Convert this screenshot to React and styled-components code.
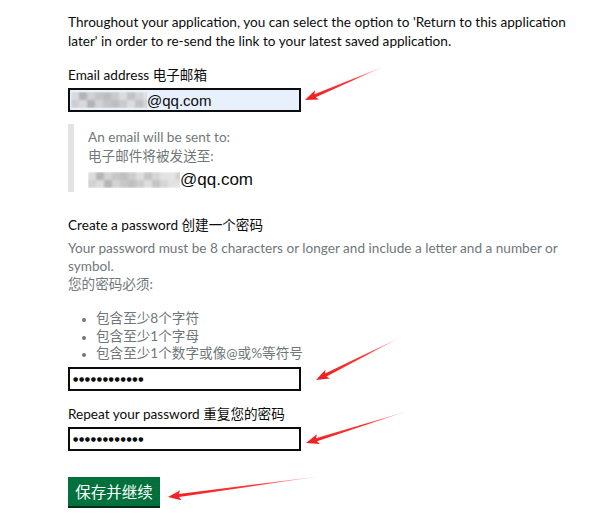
import React from 'react';
import styled, { createGlobalStyle } from 'styled-components';

const GlobalStyle = createGlobalStyle`
  html, body {
    margin: 0;
    background: #fff;
  }
  body {
    font-family: Lato, "Noto Sans CJK SC", sans-serif;
    color: #0b0c0c;
  }
`;

const Page = styled.div`
  position: relative;
  width: 600px;
  height: 528px;
  padding: 13px 0 0 68px;
  box-sizing: border-box;
`;

const Lead = styled.p`
  margin: 0 0 15px;
  font-size: 13.6px;
  line-height: 19px;
  width: 520px;
`;

const Label = styled.div`
  font-size: 13.6px;
  line-height: 19px;
  margin-bottom: 3px;
`;

const Field = styled.div`
  width: 233px;
  height: 24px;
  box-sizing: border-box;
  border: 2px solid #0b0c0c;
  background: ${p => (p.$filled ? '#e8f0fe' : '#fff')};
  display: flex;
  align-items: center;
  padding-left: ${p => (p.$filled ? '1px' : '3px')};
  font-family: "Liberation Sans", Arial, sans-serif;
  font-size: 15px;
  margin-bottom: ${p => p.$gap || 0}px;
`;

const Dots = styled.span`
  font-family: "DejaVu Sans", sans-serif;
  font-size: 6px;
  letter-spacing: 0.7px;
  line-height: 1;
`;

const Inset = styled.div`
  margin: 12px 0 0;
  border-left: 6px solid #e3e3e3;
  padding: 4px 0 4px 14px;
  height: 60px;
`;

const Grey = styled.div`
  color: #6f777b;
  font-size: 13.6px;
  line-height: 19px;
`;

const SentTo = styled.div`
  display: flex;
  align-items: center;
  margin-top: 4px;
  font-family: "Liberation Sans", Arial, sans-serif;
  font-size: 17px;
  color: #0b0c0c;
`;

const Section = styled.div`
  margin-top: 24px;
`;

const Hint = styled.div`
  color: #6f777b;
  font-size: 13.6px;
  line-height: 18px;
  margin-top: 4px;
`;

const Bullets = styled.ul`
  margin: 17px 0 4px;
  padding-left: 28px;
  color: #6f777b;
  font-size: 13.6px;
  line-height: 17.5px;
  li::marker {
    font-size: 11px;
  }
`;

const Button = styled.button`
  margin-top: 26px;
  width: 92px;
  height: 29px;
  border: none;
  background: #00703c;
  box-shadow: 0 2px 0 #002d18;
  color: #fff;
  font-family: "Noto Sans CJK SC", sans-serif;
  font-size: 15.5px;
  padding: 0;
`;

const Overlay = styled.svg`
  position: absolute;
  left: 0;
  top: 0;
  pointer-events: none;
`;

function Mosaic({ width, height }) {
  const greys = ['#d6d6d6', '#c4c4c4', '#e0e0e0', '#bdbdbd', '#cfcfcf', '#a9a9a9', '#d9d9d9', '#c9c9c9', '#b5b5b5', '#dedede', '#cccccc', '#bababa'];
  const cols = Math.ceil(width / 8);
  const cells = [];
  for (let c = 0; c < cols; c++) {
    for (let r = 0; r < 2; r++) {
      cells.push(
        <rect key={`${c}-${r}`} x={c * 8} y={r * (height / 2)} width={8} height={height / 2}
          fill={greys[(c * 5 + r * 7) % greys.length]} />
      );
    }
  }
  return (
    <svg width={width} height={height} style={{ display: 'block' }}>
      <defs>
        <filter id="blr"><feGaussianBlur stdDeviation="1" /></filter>
      </defs>
      <g filter="url(#blr)" opacity="0.85">{cells}</g>
    </svg>
  );
}

function Arrow({ x1, y1, x2, y2 }) {
  // tail (x1,y1) -> tip (x2,y2), tapering stroke with a head
  const dx = x2 - x1;
  const dy = y2 - y1;
  const len = Math.hypot(dx, dy);
  const ux = dx / len;
  const uy = dy / len;
  const nx = -uy;
  const ny = ux;
  const headLen = 11;
  const bx = x2 - ux * headLen;
  const by = y2 - uy * headLen;
  const pts = [
    [x1, y1],
    [bx + nx * 1.6, by + ny * 1.6],
    [bx - ux * 2 + nx * 5, by - uy * 2 + ny * 5],
    [x2, y2],
    [bx - ux * 2 - nx * 5, by - uy * 2 - ny * 5],
    [bx - nx * 1.6, by - ny * 1.6],
  ];
  return (
    <polygon points={pts.map(p => p.join(',')).join(' ')} fill="url(#arrowGrad)" />
  );
}

export default function App() {
  return (
    <>
      <GlobalStyle />
      <Page>
        <Lead>
          Throughout your application, you can select the option to 'Return to this application
          later' in order to re-send the link to your latest saved application.
        </Lead>

        <Label>Email address 电子邮箱</Label>
        <Field $filled>
          <Mosaic width={76} height={16} />
          <span>@qq.com</span>
        </Field>

        <Inset>
          <Grey>An email will be sent to:</Grey>
          <Grey>电子邮件将被发送至:</Grey>
          <SentTo>
            <Mosaic width={92} height={16} />
            <span>@qq.com</span>
          </SentTo>
        </Inset>

        <Section>
          <Label>Create a password 创建一个密码</Label>
          <Hint>
            Your password must be 8 characters or longer and include a letter and a number or
            symbol.
            <br />
            您的密码必须:
          </Hint>
          <Bullets>
            <li>包含至少8个字符</li>
            <li>包含至少1个字母</li>
            <li>包含至少1个数字或像@或%等符号</li>
          </Bullets>
          <Field $gap={14}>
            <Dots>●●●●●●●●●●●●</Dots>
          </Field>
          <Label>Repeat your password 重复您的密码</Label>
          <Field>
            <Dots>●●●●●●●●●●●●</Dots>
          </Field>
        </Section>

        <Button>保存并继续</Button>

        <Overlay width="600" height="528">
          <defs>
            <linearGradient id="arrowGrad" gradientUnits="objectBoundingBox" x1="1" y1="0" x2="0" y2="1">
              <stop offset="0" stopColor="#ff3b3b" stopOpacity="0.2" />
              <stop offset="0.4" stopColor="#f22" stopOpacity="0.9" />
              <stop offset="1" stopColor="#f01d1d" />
            </linearGradient>
          </defs>
          <Arrow x1={385} y1={66} x2={305} y2={100} />
          <Arrow x1={401} y1={337} x2={316} y2={380} />
          <Arrow x1={408} y1={411} x2={306} y2={443} />
          <Arrow x1={322} y1={476} x2={168} y2={497} />
        </Overlay>
      </Page>
    </>
  );
}
